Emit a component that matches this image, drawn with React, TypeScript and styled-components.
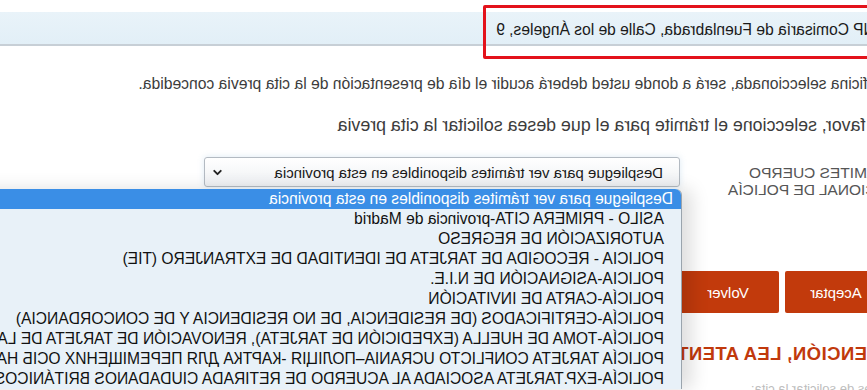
import styled, { createGlobalStyle } from 'styled-components';
import { ChevronDown } from 'lucide-react';

const GlobalStyle = createGlobalStyle`
  html, body {
    margin: 0;
    padding: 0;
    background: #ffffff;
    overflow: hidden;
  }
  body {
    font-family: "Liberation Sans", Arial, sans-serif;
  }
`;

// the screenshot is a mirror image of the page, so the whole page is flipped
const Mirror = styled.div`
  position: relative;
  width: 867px;
  height: 390px;
  overflow: hidden;
  transform: scaleX(-1);
  background: #ffffff;
`;

const Page = styled.div`
  margin-left: -31px;
  width: 898px;
  display: flex;
  flex-direction: column;
`;

const OfficeField = styled.div`
  margin-top: 12px;
  height: 32px;
  line-height: 35px;
  padding-left: 12px;
  background: linear-gradient(#e9f3f9, #e2eff7);
  border-bottom: 2px solid #c7cfd6;
  color: #1a1a1a;
  font-size: 15.6px;
  white-space: nowrap;
`;

const Highlight = styled.div`
  position: absolute;
  left: -10px;
  top: 5px;
  width: 388px;
  height: 48px;
  border: 3.5px solid #e3121b;
  border-radius: 2px;
`;

const Info = styled.p<{ $size: number; $gap: number }>`
  margin: ${(p) => p.$gap}px 0 0;
  font-size: ${(p) => p.$size}px;
  line-height: 18px;
  color: #3c3c3c;
  white-space: nowrap;
`;

const FormRow = styled.div`
  margin-top: 23px;
  height: 41px;
  display: flex;
  align-items: flex-start;
`;

const Label = styled.div`
  width: 218px;
  padding-top: 7px;
  font-size: 15.5px;
  line-height: 17px;
  color: #555555;
  text-transform: uppercase;
`;

const SelectWrap = styled.div`
  position: relative;
`;

const SelectBox = styled.div`
  width: 458px;
  height: 28px;
  padding: 0 0 0 16px;
  display: flex;
  align-items: center;
  justify-content: space-between;
  border: 1px solid #b3bac2;
  border-radius: 3px;
  background: linear-gradient(#ffffff, #eef0f3);
  box-shadow: 0 0 6px rgba(120, 170, 210, 0.25);
  font-size: 15px;
  color: #1a1a1a;
  white-space: nowrap;

  svg {
    margin-right: 6px;
    flex-shrink: 0;
  }
`;

const Options = styled.ul`
  position: absolute;
  top: 32px;
  left: -2px;
  width: 720px;
  margin: 0;
  padding: 0;
  list-style: none;
  background: #e8f1f8;
  border-left: 1px solid #9aa4ad;
  border-top-left-radius: 6px;
  box-shadow: -10px 0 18px rgba(0, 0, 0, 0.13);
  z-index: 2;
`;

const Option = styled.li<{ $active?: boolean }>`
  height: 20px;
  line-height: 20px;
  padding-left: ${(p) => (p.$active ? 8 : 17)}px;
  font-size: 15.6px;
  white-space: nowrap;
  color: ${(p) => (p.$active ? '#ffffff' : '#111111')};
  background: ${(p) => (p.$active ? '#3a8ee6' : 'transparent')};
  border-top-left-radius: ${(p) => (p.$active ? 6 : 0)}px;
`;

const Buttons = styled.div`
  margin-top: 73px;
  padding-left: 11px;
  display: flex;
  gap: 6px;
`;

const Button = styled.button`
  width: 102px;
  height: 42px;
  border: none;
  border-radius: 2px;
  background: #c23a0c;
  color: #ffffff;
  font-family: "Liberation Sans", Arial, sans-serif;
  font-size: 15px;
  cursor: pointer;
`;

const Warning = styled.h2`
  margin: 30px 0 0;
  padding-left: 7px;
  font-size: 18.5px;
  line-height: 22px;
  font-weight: 700;
  letter-spacing: 0.4px;
  color: #c1390c;
  white-space: nowrap;
`;

const Note = styled.p`
  margin: 16px 0 0;
  padding-left: 7px;
  font-size: 13px;
  line-height: 16px;
  color: #bdbdbd;
  white-space: nowrap;
`;

const tramites = [
  'ASILO - PRIMERA CITA-provincia de Madrid',
  'AUTORIZACIÓN DE REGRESO',
  'POLICIA - RECOGIDA DE TARJETA DE IDENTIDAD DE EXTRANJERO (TIE)',
  'POLICIA-ASIGNACIÓN DE N.I.E.',
  'POLICÍA-CARTA DE INVITACIÓN',
  'POLICÍA-CERTIFICADOS (DE RESIDENCIA, DE NO RESIDENCIA Y DE CONCORDANCIA)',
  'POLICÍA-TOMA DE HUELLA (EXPEDICIÓN DE TARJETA), RENOVACIÓN DE TARJETA DE LARGA DURACIÓN Y DUPLICADO',
  'POLICÍA TARJETA CONFLICTO UCRANIA–ПОЛІЦІЯ -КАРТКА ДЛЯ ПЕРЕМІЩЕНИХ ОСІБ НА ТЕРИТОРІЇ ІСПАНІЇ',
  'POLICÍA-EXP.TARJETA ASOCIADA AL ACUERDO DE RETIRADA CIUDADANOS BRITÁNICOS Y SUS FAMILIARES (BREXIT)',
];

const placeholder = 'Despliegue para ver trámites disponibles en esta provincia';

export default function App() {
  return (
    <>
      <GlobalStyle />
      <Mirror>
        <Page>
          <OfficeField>CNP Comisaría de Fuenlabrada, Calle de los Ángeles, 9</OfficeField>
          <Info $size={15.7} $gap={29}>
            La oficina seleccionada, será a donde usted deberá acudir el día de presentación de la cita previa concedida.
          </Info>
          <Info $size={17.8} $gap={23}>
            Por favor, seleccione el trámite para el que desea solicitar la cita previa
          </Info>
          <FormRow>
            <Label>
              Trámites cuerpo
              <br />
              nacional de policía
            </Label>
            <SelectWrap>
              <SelectBox>
                <span>{placeholder}</span>
                <ChevronDown size={13} strokeWidth={3.5} color="#222" />
              </SelectBox>
              <Options>
                <Option $active>{placeholder}</Option>
                {tramites.map((t) => (
                  <Option key={t}>{t}</Option>
                ))}
              </Options>
            </SelectWrap>
          </FormRow>
          <Buttons>
            <Button>Aceptar</Button>
            <Button>Volver</Button>
          </Buttons>
          <Warning>ATENCIÓN, LEA ATENTAMENTE</Warning>
          <Note>Antes de solicitar la cita:</Note>
        </Page>
        <Highlight />
      </Mirror>
    </>
  );
}
